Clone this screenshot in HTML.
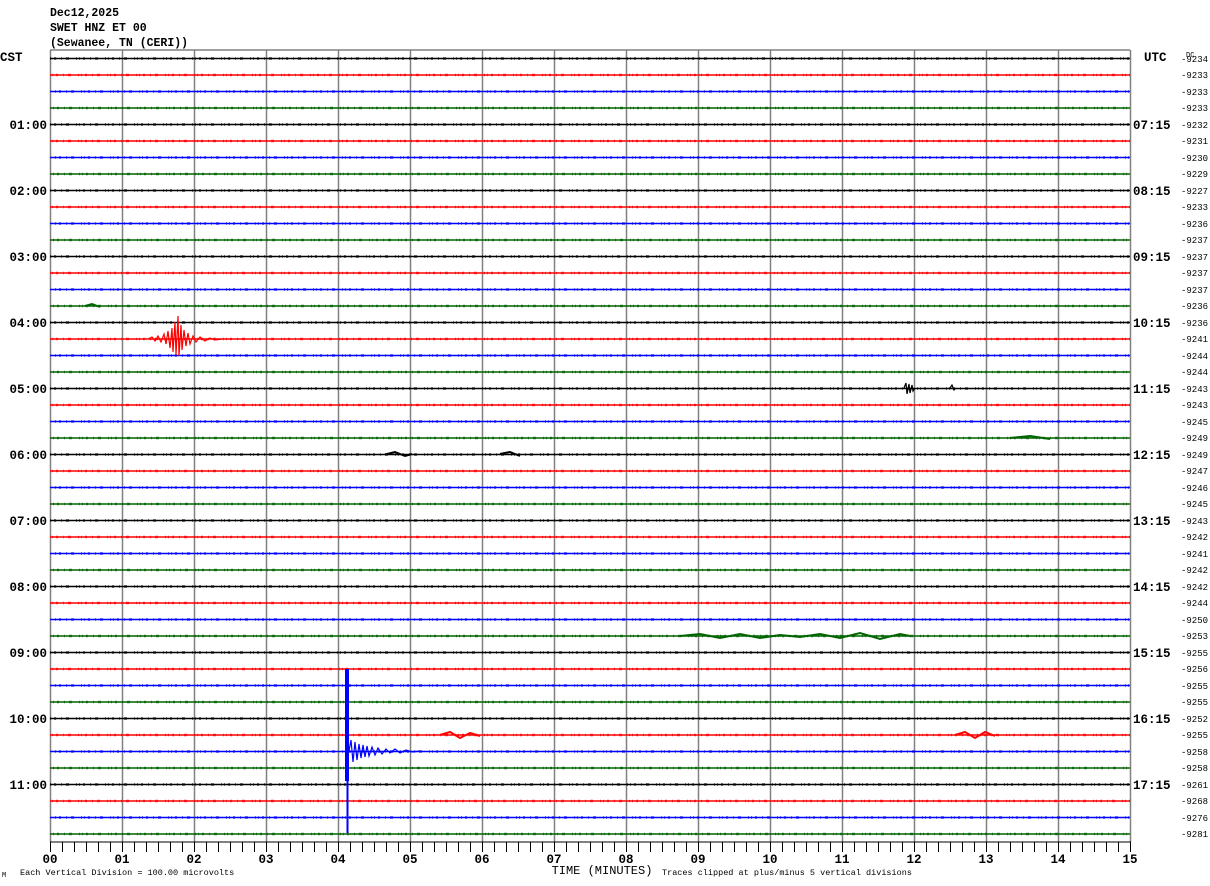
<!DOCTYPE html>
<html><head><meta charset="utf-8"><style>
html,body{margin:0;padding:0;background:#fff;}
svg{display:block;font-family:"Liberation Mono",monospace;}
.h{font-size:12.5px;font-weight:bold;}
.r{font-size:9px;}
</style></head><body>
<svg width="1210" height="886" viewBox="0 0 1210 886" xmlns="http://www.w3.org/2000/svg">
<rect width="1210" height="886" fill="#fff"/>
<g font-size="11.5" font-weight="bold" fill="#000">
<text x="50" y="16">Dec12,2025</text>
<text x="50" y="31">SWET HNZ ET 00</text>
<text x="50" y="46">(Sewanee, TN (CERI))</text>
</g>
<g stroke="#808080" stroke-width="1.5">
<line x1="50" y1="50" x2="1130" y2="50"/>
<line x1="50.5" y1="50" x2="50.5" y2="842"/><line x1="122.5" y1="50" x2="122.5" y2="842"/><line x1="194.5" y1="50" x2="194.5" y2="842"/><line x1="266.5" y1="50" x2="266.5" y2="842"/><line x1="338.5" y1="50" x2="338.5" y2="842"/><line x1="410.5" y1="50" x2="410.5" y2="842"/><line x1="482.5" y1="50" x2="482.5" y2="842"/><line x1="554.5" y1="50" x2="554.5" y2="842"/><line x1="626.5" y1="50" x2="626.5" y2="842"/><line x1="698.5" y1="50" x2="698.5" y2="842"/><line x1="770.5" y1="50" x2="770.5" y2="842"/><line x1="842.5" y1="50" x2="842.5" y2="842"/><line x1="914.5" y1="50" x2="914.5" y2="842"/><line x1="986.5" y1="50" x2="986.5" y2="842"/><line x1="1058.5" y1="50" x2="1058.5" y2="842"/><line x1="1130.5" y1="50" x2="1130.5" y2="842"/>
</g>
<line x1="50" y1="842" x2="1131" y2="842" stroke="#000" stroke-width="1"/>
<line x1="50" y1="847" x2="1131" y2="847" stroke="#000" stroke-width="10" stroke-dasharray="1 11"/>
<g stroke-width="1.6" fill="none">
<line x1="50" x2="1130" y1="58.5" y2="58.5" stroke="#000"/>
<line x1="50" x2="1130" y1="75" y2="75" stroke="#f00"/>
<line x1="50" x2="1130" y1="91.5" y2="91.5" stroke="#00f"/>
<line x1="50" x2="1130" y1="108" y2="108" stroke="#006400"/>
<line x1="50" x2="1130" y1="124.5" y2="124.5" stroke="#000"/>
<line x1="50" x2="1130" y1="141" y2="141" stroke="#f00"/>
<line x1="50" x2="1130" y1="157.5" y2="157.5" stroke="#00f"/>
<line x1="50" x2="1130" y1="174" y2="174" stroke="#006400"/>
<line x1="50" x2="1130" y1="190.5" y2="190.5" stroke="#000"/>
<line x1="50" x2="1130" y1="207" y2="207" stroke="#f00"/>
<line x1="50" x2="1130" y1="223.5" y2="223.5" stroke="#00f"/>
<line x1="50" x2="1130" y1="240" y2="240" stroke="#006400"/>
<line x1="50" x2="1130" y1="256.5" y2="256.5" stroke="#000"/>
<line x1="50" x2="1130" y1="273" y2="273" stroke="#f00"/>
<line x1="50" x2="1130" y1="289.5" y2="289.5" stroke="#00f"/>
<line x1="50" x2="1130" y1="306" y2="306" stroke="#006400"/>
<line x1="50" x2="1130" y1="322.5" y2="322.5" stroke="#000"/>
<line x1="50" x2="1130" y1="339" y2="339" stroke="#f00"/>
<line x1="50" x2="1130" y1="355.5" y2="355.5" stroke="#00f"/>
<line x1="50" x2="1130" y1="372" y2="372" stroke="#006400"/>
<line x1="50" x2="1130" y1="388.5" y2="388.5" stroke="#000"/>
<line x1="50" x2="1130" y1="405" y2="405" stroke="#f00"/>
<line x1="50" x2="1130" y1="421.5" y2="421.5" stroke="#00f"/>
<line x1="50" x2="1130" y1="438" y2="438" stroke="#006400"/>
<line x1="50" x2="1130" y1="454.5" y2="454.5" stroke="#000"/>
<line x1="50" x2="1130" y1="471" y2="471" stroke="#f00"/>
<line x1="50" x2="1130" y1="487.5" y2="487.5" stroke="#00f"/>
<line x1="50" x2="1130" y1="504" y2="504" stroke="#006400"/>
<line x1="50" x2="1130" y1="520.5" y2="520.5" stroke="#000"/>
<line x1="50" x2="1130" y1="537" y2="537" stroke="#f00"/>
<line x1="50" x2="1130" y1="553.5" y2="553.5" stroke="#00f"/>
<line x1="50" x2="1130" y1="570" y2="570" stroke="#006400"/>
<line x1="50" x2="1130" y1="586.5" y2="586.5" stroke="#000"/>
<line x1="50" x2="1130" y1="603" y2="603" stroke="#f00"/>
<line x1="50" x2="1130" y1="619.5" y2="619.5" stroke="#00f"/>
<line x1="50" x2="1130" y1="636" y2="636" stroke="#006400"/>
<line x1="50" x2="1130" y1="652.5" y2="652.5" stroke="#000"/>
<line x1="50" x2="1130" y1="669" y2="669" stroke="#f00"/>
<line x1="50" x2="1130" y1="685.5" y2="685.5" stroke="#00f"/>
<line x1="50" x2="1130" y1="702" y2="702" stroke="#006400"/>
<line x1="50" x2="1130" y1="718.5" y2="718.5" stroke="#000"/>
<line x1="50" x2="1130" y1="735" y2="735" stroke="#f00"/>
<line x1="50" x2="1130" y1="751.5" y2="751.5" stroke="#00f"/>
<line x1="50" x2="1130" y1="768" y2="768" stroke="#006400"/>
<line x1="50" x2="1130" y1="784.5" y2="784.5" stroke="#000"/>
<line x1="50" x2="1130" y1="801" y2="801" stroke="#f00"/>
<line x1="50" x2="1130" y1="817.5" y2="817.5" stroke="#00f"/>
<line x1="50" x2="1130" y1="834" y2="834" stroke="#006400"/>
</g>
<g stroke-width="2.6" stroke-dasharray="1 3 2 5 1 4 3 7 1 2" fill="none" opacity="0.75">
<path stroke="#000" d="M50 58.5H1130M50 124.5H1130M50 190.5H1130M50 256.5H1130M50 322.5H1130M50 388.5H1130M50 454.5H1130M50 520.5H1130M50 586.5H1130M50 652.5H1130M50 718.5H1130M50 784.5H1130"/>
<path stroke="#f00" d="M52 75H1130M52 141H1130M52 207H1130M52 273H1130M52 339H1130M52 405H1130M52 471H1130M52 537H1130M52 603H1130M52 669H1130M52 735H1130M52 801H1130"/>
<path stroke="#00f" d="M55 91.5H1130M55 157.5H1130M55 223.5H1130M55 289.5H1130M55 355.5H1130M55 421.5H1130M55 487.5H1130M55 553.5H1130M55 619.5H1130M55 685.5H1130M55 751.5H1130M55 817.5H1130"/>
<path stroke="#006400" d="M53 108H1130M53 174H1130M53 240H1130M53 306H1130M53 372H1130M53 438H1130M53 504H1130M53 570H1130M53 636H1130M53 702H1130M53 768H1130M53 834H1130"/>
</g>
<path fill="none" stroke="#f00" stroke-width="1.2" d="M148 339L152 337L155 341L158 336L161 342L164 334L166 344L168 331L170 348L172 328L173 352L175 322L176 355L178 316L179 356L181 325L182 350L184 330L186 346L188 333L190 344L193 336L196 342L200 337L205 341L210 338L215 340L222 339"/>
<path fill="none" stroke="#000" stroke-width="1.2" d="M904 388L906 383L907 394L909 384L910 393L912 385L913 391L915 388M950 388L952 385L954 390L956 388"/>
<path fill="none" stroke="#006400" stroke-width="2" d="M680 636L700 634L720 638L740 634L760 638L780 635L800 637L820 634L840 638L860 633L880 639L900 634L910 636M1010 438L1030 436L1050 439"/>
<path fill="none" stroke="#f00" stroke-width="2" d="M440 735L450 732L460 738L470 733L480 736M955 735L965 732L975 738L985 732L995 736"/>
<path fill="none" stroke="#006400" stroke-width="2" d="M85 306L92 304L100 307"/>
<path fill="none" stroke="#000" stroke-width="2" d="M385 454.5L395 452L405 456L412 454M500 454L510 452L520 456"/>
<rect x="345" y="669" width="4" height="112" fill="#00f"/>
<rect x="346.5" y="669" width="2" height="164" fill="#00f"/>
<path fill="none" stroke="#00f" stroke-width="1.2" d="M349 751L351 740L353 762L355 742L357 760L359 744L361 758L363 745L365 757L367 746L369 756L372 747L375 755L378 748L382 754L386 749L390 753L395 749L400 753L406 750L412 752L420 751"/>
<g class="h" fill="#000">
<text x="0" y="61">CST</text>
</g>
<g class="h" text-anchor="end" fill="#000">
<text x="47" y="129">01:00</text>
<text x="47" y="195">02:00</text>
<text x="47" y="261">03:00</text>
<text x="47" y="327">04:00</text>
<text x="47" y="393">05:00</text>
<text x="47" y="459">06:00</text>
<text x="47" y="525">07:00</text>
<text x="47" y="591">08:00</text>
<text x="47" y="657">09:00</text>
<text x="47" y="723">10:00</text>
<text x="47" y="789">11:00</text>
</g>
<g class="h" fill="#000">
<text x="1144" y="61">UTC</text>
<text x="1133" y="129">07:15</text>
<text x="1133" y="195">08:15</text>
<text x="1133" y="261">09:15</text>
<text x="1133" y="327">10:15</text>
<text x="1133" y="393">11:15</text>
<text x="1133" y="459">12:15</text>
<text x="1133" y="525">13:15</text>
<text x="1133" y="591">14:15</text>
<text x="1133" y="657">15:15</text>
<text x="1133" y="723">16:15</text>
<text x="1133" y="789">17:15</text>
</g>
<g class="r" fill="#000">
<text x="1186" y="57" font-size="7">DC</text>
<text x="1181" y="62">-9234</text><text x="1181" y="78">-9233</text><text x="1181" y="95">-9233</text><text x="1181" y="111">-9233</text>
<text x="1181" y="128">-9232</text><text x="1181" y="144">-9231</text><text x="1181" y="161">-9230</text><text x="1181" y="177">-9229</text>
<text x="1181" y="194">-9227</text><text x="1181" y="210">-9233</text><text x="1181" y="227">-9236</text><text x="1181" y="243">-9237</text>
<text x="1181" y="260">-9237</text><text x="1181" y="276">-9237</text><text x="1181" y="293">-9237</text><text x="1181" y="309">-9236</text>
<text x="1181" y="326">-9236</text><text x="1181" y="342">-9241</text><text x="1181" y="359">-9244</text><text x="1181" y="375">-9244</text>
<text x="1181" y="392">-9243</text><text x="1181" y="408">-9243</text><text x="1181" y="425">-9245</text><text x="1181" y="441">-9249</text>
<text x="1181" y="458">-9249</text><text x="1181" y="474">-9247</text><text x="1181" y="491">-9246</text><text x="1181" y="507">-9245</text>
<text x="1181" y="524">-9243</text><text x="1181" y="540">-9242</text><text x="1181" y="557">-9241</text><text x="1181" y="573">-9242</text>
<text x="1181" y="590">-9242</text><text x="1181" y="606">-9244</text><text x="1181" y="623">-9250</text><text x="1181" y="639">-9253</text>
<text x="1181" y="656">-9255</text><text x="1181" y="672">-9256</text><text x="1181" y="689">-9255</text><text x="1181" y="705">-9255</text>
<text x="1181" y="722">-9252</text><text x="1181" y="738">-9255</text><text x="1181" y="755">-9258</text><text x="1181" y="771">-9258</text>
<text x="1181" y="788">-9261</text><text x="1181" y="804">-9268</text><text x="1181" y="821">-9276</text><text x="1181" y="837">-9281</text>
</g>
<g class="h" text-anchor="middle" fill="#000" font-size="13">
<text x="50" y="863">00</text><text x="122" y="863">01</text><text x="194" y="863">02</text><text x="266" y="863">03</text><text x="338" y="863">04</text><text x="410" y="863">05</text><text x="482" y="863">06</text><text x="554" y="863">07</text><text x="626" y="863">08</text><text x="698" y="863">09</text><text x="770" y="863">10</text><text x="842" y="863">11</text><text x="914" y="863">12</text><text x="986" y="863">13</text><text x="1058" y="863">14</text><text x="1130" y="863">15</text>
</g>
<text x="602" y="874" text-anchor="middle" font-size="12" fill="#000">TIME (MINUTES)</text>
<text x="2" y="877" font-size="7" fill="#000">M</text>
<text x="20" y="875" font-size="8.5" fill="#000">Each Vertical Division =  100.00 microvolts</text>
<text x="662" y="875" font-size="8.5" fill="#000">Traces clipped at plus/minus 5 vertical divisions</text>
</svg>
</body></html>
